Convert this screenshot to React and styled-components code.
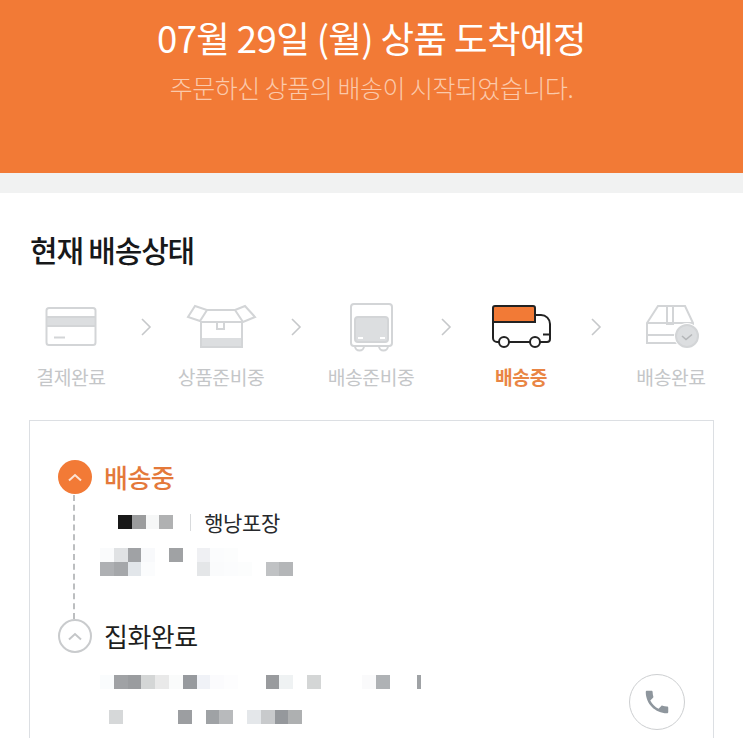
import styled, { createGlobalStyle } from "styled-components"
import { MdPhone } from "react-icons/md"

const GlobalStyle = createGlobalStyle`
  html, body {
    margin: 0;
    padding: 0;
    background: #fff;
  }
  body {
    font-family: "Noto Sans CJK KR", "Noto Sans", sans-serif;
  }
`

const ORANGE = "#f27a36"
const LINE = "#d3d5d7"
const FILL = "#dcdee0"
const INK = "#26282b"

const Page = styled.div`
  width: 743px;
  height: 738px;
  overflow: hidden;
  background: #fff;
`

const Banner = styled.header`
  height: 173px;
  box-sizing: border-box;
  padding-top: 12px;
  background: ${ORANGE};
  text-align: center;
`

const Headline = styled.h1`
  margin: 0;
  font-size: 36.5px;
  line-height: 52px;
  font-weight: 400;
  letter-spacing: -0.62px;
  color: #fff;
`

const Subline = styled.p`
  margin: 5px 0 0;
  font-size: 25px;
  line-height: 36px;
  font-weight: 300;
  letter-spacing: -0.5px;
  color: #fbc9ab;
`

const Divider = styled.div`
  height: 20px;
  background: #f1f2f2;
`

const Section = styled.section`
  padding: 35px 29px 0 30px;
`

const SectionTitle = styled.h2`
  margin: 0 0 32px;
  font-size: 30px;
  line-height: 42px;
  font-weight: 500;
  letter-spacing: -1.2px;
  color: #17181a;
`

const Steps = styled.ol`
  display: flex;
  margin: 0 0 29px;
  padding: 0 0 0 1px;
  list-style: none;
`

const Step = styled.li`
  width: 80px;
  display: flex;
  flex-direction: column;
  align-items: center;
  gap: 11px;
`

const StepLabel = styled.span`
  font-size: 19.3px;
  line-height: 28px;
  letter-spacing: -0.4px;
  white-space: nowrap;
  font-weight: ${({ $active }) => ($active ? 700 : 400)};
  color: ${({ $active }) => ($active ? "#e98544" : "#c4c6c8")};
`

const Arrow = styled.li`
  width: 70px;
  height: 50px;
  display: flex;
  align-items: center;
  justify-content: center;
`

const Card = styled.div`
  box-sizing: border-box;
  height: 400px;
  margin-left: -1px;
  padding: 39px 28px 0 28px;
  border: 1px solid #dcdfe3;
`

const Event = styled.div`
  display: grid;
  grid-template-columns: 34px 1fr;
  column-gap: 12px;
`

const Marker = styled.div`
  display: flex;
  flex-direction: column;
  align-items: center;
`

const Dot = styled.span`
  width: 34px;
  height: 34px;
  flex: none;
  box-sizing: border-box;
  border-radius: 50%;
  display: flex;
  align-items: center;
  justify-content: center;
  background: ${({ $on }) => ($on ? ORANGE : "#fff")};
  border: ${({ $on }) => ($on ? "none" : "2px solid #c9cbcd")};
`

const Dotted = styled.span`
  flex: 1;
  width: 0;
  margin: 1px 2px 0 0;
  border-left: 2px dashed #bcbec0;
`

const Body = styled.div`
  min-width: 0;
  padding-bottom: 43px;
`

const EventTitle = styled.div`
  font-size: 26px;
  line-height: 34px;
  font-weight: ${({ $on }) => ($on ? 500 : 400)};
  letter-spacing: -0.5px;
  color: ${({ $on }) => ($on ? "#e4793a" : "#1d1e20")};
`

const Courier = styled.div`
  display: flex;
  align-items: center;
  margin: 16px 0 14px;
  height: 24px;
`

const CourierName = styled.span`
  font-size: 21px;
  line-height: 24px;
  letter-spacing: -0.4px;
  color: ${INK};
`

const Bar = styled.span`
  width: 1px;
  height: 17px;
  margin: 0 13px 0 17px;
  background: #d8dadc;
`

const Blur = styled.div`
  display: flex;
  height: 14px;
  margin-left: ${({ $left }) => $left || 0}px;
  margin-top: ${({ $top }) => $top || 0}px;
`

const Pixel = styled.i`
  display: block;
  flex: none;
  width: ${({ $w }) => $w || 13.8}px;
  height: 100%;
  background: ${({ $c }) => $c || "transparent"};
`

const Details = styled.div`
  display: flex;
  justify-content: space-between;
  align-items: flex-end;
`

const CallButton = styled.button`
  width: 56px;
  height: 56px;
  flex: none;
  margin: 0 0 -6px;
  padding: 0;
  border: 1.5px solid #cdcfd1;
  border-radius: 50%;
  background: #fff;
  display: flex;
  align-items: center;
  justify-content: center;
  color: #8e969d;
`

// one censored line of text: each entry is a cell colour, null leaves a gap
const BlurRow = ({ cells, left, top }) => (
  <Blur $left={left} $top={top}>
    {cells.map((c, i) =>
      Array.isArray(c) ? <Pixel key={i} $c={c[0]} $w={c[1]} /> : <Pixel key={i} $c={c} />
    )}
  </Blur>
)

const Chevron = () => (
  <svg width="12" height="20" viewBox="0 0 12 20" fill="none">
    <path d="M2 2l8 8-8 8" stroke="#c6c8ca" strokeWidth="1.6" />
  </svg>
)

const Glyph = ({ children }) => (
  <svg width="80" height="50" viewBox="0 0 80 50" fill="none" stroke={LINE} strokeWidth="2">
    {children}
  </svg>
)

const CardIcon = () => (
  <Glyph>
    <rect x="15.500" y="15" width="49" height="9" fill={FILL} stroke="none" />
    <rect x="15.500" y="6" width="49" height="37" rx="2.500" />
    <path d="M15.500 15h49M15.500 24h49" />
    <path d="M23 35.500h11" />
  </Glyph>
)

const BoxIcon = () => (
  <Glyph>
    <rect x="20" y="36" width="41" height="9" fill={FILL} stroke="none" />
    <path d="M20 20h41v25H20z" />
    <path d="M26 8h28" />
    <path d="M14 4l12 4-7 11-12-4zM64 4l-10 4 8 12 12-5z" />
    <path d="M36 20v7h7v-7" />
  </Glyph>
)

const BusIcon = () => (
  <Glyph>
    <path d="M23 2h35a3 3 0 0 1 3 3v36a3 3 0 0 1-3 3H23a3 3 0 0 1-3-3V5a3 3 0 0 1 3-3z" />
    <rect x="24" y="15" width="33" height="25" rx="3" fill={FILL} />
    <path d="M27 36h5M49 36h5" stroke="#fff" />
    <path d="M24 44a4.500 4.500 0 0 0 9 0M48 44a4.500 4.500 0 0 0 9 0" />
  </Glyph>
)

const TruckIcon = () => (
  <svg width="80" height="50" viewBox="0 0 80 50" fill="none" stroke="#222" strokeWidth="2">
    <path d="M12 20V6a2 2 0 0 1 2-2h38a2 2 0 0 1 2 2v14z" fill={ORANGE} />
    <path d="M12 20v16a4 4 0 0 0 4 4h2M28 40h21M54 13h6a9 9 0 0 1 9 9v15a3 3 0 0 1-3 3h-7" />
    <path d="M62 32.500h7" />
    <circle cx="23" cy="40" r="5" />
    <circle cx="54" cy="40" r="5" />
  </svg>
)

const DoneIcon = () => (
  <Glyph>
    <path d="M16 21l11-17h27l8 17v20H16z" />
    <path d="M16 21h46M16 33h46" />
    <path d="M36 4v18h6V4" />
    <circle cx="56" cy="34" r="12" fill={FILL} stroke="#fff" strokeWidth="2" />
    <circle cx="56" cy="34" r="11" stroke={LINE} />
    <path d="M51 34l4 3.500 6-5" stroke="#b4b6b8" strokeWidth="1.600" />
  </Glyph>
)

const Caret = ({ color }) => (
  <svg width="16" height="9" viewBox="0 0 16 9" fill="none">
    <path d="M2 7.500l6-5.500 6 5.500" stroke={color} strokeWidth="2" />
  </svg>
)

const steps = [
  { label: "결제완료", icon: <CardIcon /> },
  { label: "상품준비중", icon: <BoxIcon /> },
  { label: "배송준비중", icon: <BusIcon /> },
  { label: "배송중", icon: <TruckIcon />, active: true },
  { label: "배송완료", icon: <DoneIcon /> },
]

export default function App() {
  return (
    <Page>
      <GlobalStyle />
      <Banner>
        <Headline>07월 29일 (월) 상품 도착예정</Headline>
        <Subline>주문하신 상품의 배송이 시작되었습니다.</Subline>
      </Banner>
      <Divider />
      <Section>
        <SectionTitle>현재 배송상태</SectionTitle>
        <Steps>
          {steps.map((s, i) => [
            <Step key={s.label}>
              {s.icon}
              <StepLabel $active={s.active}>{s.label}</StepLabel>
            </Step>,
            i < steps.length - 1 && (
              <Arrow key={`arrow-${i}`}>
                <Chevron />
              </Arrow>
            ),
          ])}
        </Steps>
        <Card>
          <Event>
            <Marker>
              <Dot $on>
                <Caret color="#fde3d3" />
              </Dot>
              <Dotted />
            </Marker>
            <Body>
              <EventTitle $on>배송중</EventTitle>
              <Courier>
                <BlurRow left={14} cells={["#181818", "#9b9c9d", "#f6f7f7", "#b0b1b2"]} />
                <Bar />
                <CourierName>행낭포장</CourierName>
              </Courier>
              <BlurRow
                left={-4}
                cells={["#fafbfc", "#e0e2e4", "#a0a2a5", "#f8f9fb", null, "#a0a2a4", null, "#eff0f3", "#fbfcfd", "#fcfdfd"]}
              />
              <BlurRow
                left={-4}
                cells={["#aeb0b3", "#a5a7aa", "#e2e6ea", "#fbfcfd", null, null, null, "#e4e6e8", "#fafbfc", "#fbfcfd", "#fcfdfd", null, "#c0c2c4", "#b4b6b8"]}
              />
            </Body>
          </Event>
          <Event>
            <Marker>
              <Dot>
                <Caret color="#c4c6c8" />
              </Dot>
            </Marker>
            <Body>
              <EventTitle>집화완료</EventTitle>
              <Details>
                <div>
                  <BlurRow
                    left={-4}
                    top={22}
                    cells={["#fafcfd", "#a0a2a5", "#9a9c9f", "#d4d6d6", "#e9e9e9", "#fafbfb", "#979a9e", "#f0f2f7", "#fbfbfd", "#fdfdfe", null, null, "#999b9e", "#eff2f3", null, "#d4d6d6", null, null, null, "#fafafb", "#afb2b5", null, null, ["#9fa2a5", 4]]}
                  />
                  <BlurRow
                    left={5}
                    top={21}
                    cells={["#d6d8d9", null, null, null, null, "#9c9ea1", null, "#9fa2a5", "#b8babc", null, "#e4e7ea", "#c8cacc", "#95989c", "#aeb0b1"]}
                  />
                </div>
                <CallButton aria-label="전화">
                  <MdPhone size={30} />
                </CallButton>
              </Details>
            </Body>
          </Event>
        </Card>
      </Section>
    </Page>
  )
}
